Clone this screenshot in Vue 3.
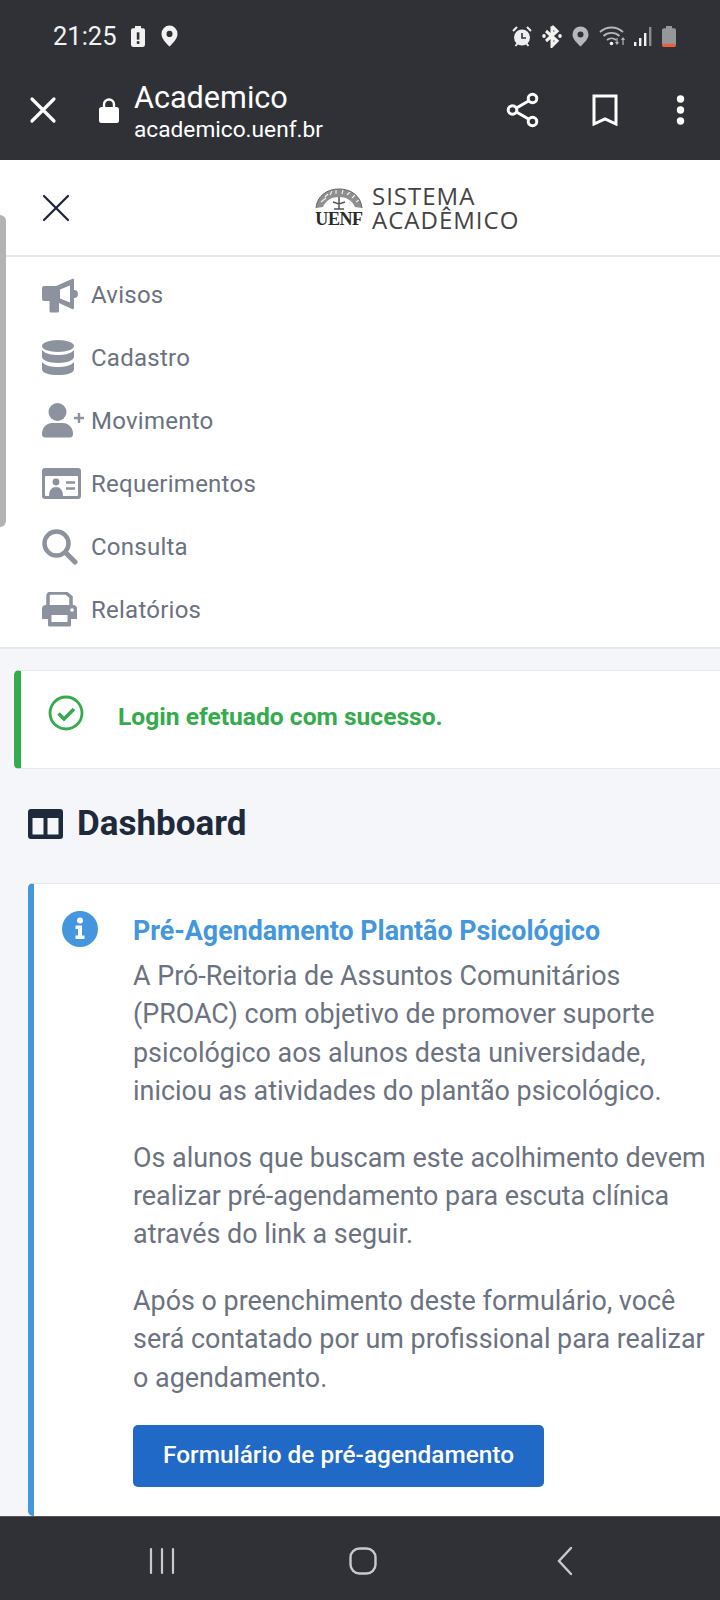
<script setup>
const menu = [
  { label: 'Avisos', icon: 'bullhorn' },
  { label: 'Cadastro', icon: 'database' },
  { label: 'Movimento', icon: 'user' },
  { label: 'Requerimentos', icon: 'card' },
  { label: 'Consulta', icon: 'search' },
  { label: 'Relatórios', icon: 'print' },
]

const paragraphs = [
  'A Pró-Reitoria de Assuntos Comunitários (PROAC) com objetivo de promover suporte psicológico aos alunos desta universidade, iniciou as atividades do plantão psicológico.',
  'Os alunos que buscam este acolhimento devem realizar pré-agendamento para escuta clínica através do link a seguir.',
  'Após o preenchimento deste formulário, você será contatado por um profissional para realizar o agendamento.',
]
</script>

<template>
  <div class="phone">
    <header class="chrome">
      <div class="status">
        <div class="status-left">
          <span class="clock">21:25</span>
          <svg class="batt-alert" width="16" height="23" viewBox="0 0 16 22" preserveAspectRatio="none"><path d="M5 1h6v2h2a2 2 0 0 1 2 2v14a2 2 0 0 1-2 2H3a2 2 0 0 1-2-2V5a2 2 0 0 1 2-2h2z" fill="#f2f2f2"/><rect x="6.800" y="7" width="2.600" height="7" fill="#303136"/><rect x="6.800" y="15.500" width="2.600" height="2.600" fill="#303136"/></svg>
          <svg class="pin" width="17" height="22" viewBox="0 0 17 21" preserveAspectRatio="none"><path d="M8.500 0.500a8 8 0 0 1 8 8c0 4.500-4.500 8.500-8 12-3.500-3.500-8-7.500-8-12a8 8 0 0 1 8-8z" fill="#f2f2f2"/><circle cx="8.500" cy="8.500" r="3" fill="#303136"/></svg>
        </div>
        <div class="status-right">
          <svg width="20" height="21" viewBox="0 0 20 21"><circle cx="10" cy="11.500" r="8" fill="#eceef2"/><path d="M10 7v5h4" stroke="#303136" stroke-width="1.600" fill="none"/><path d="M1 5l4-4M19 5l-4-4M3.500 20l2-2.500M16.500 20l-2-2.500" stroke="#eceef2" stroke-width="2"/></svg>
          <svg class="gap-10" width="20" height="24" viewBox="0 0 20 22" preserveAspectRatio="none"><path d="M10 2v18l5-4.500L4 6.500M10 2l5 4.500L4 15.500" stroke="#f2f2f2" stroke-width="3" fill="none"/><circle cx="2" cy="11" r="1.800" fill="#f2f2f2"/><circle cx="18" cy="11" r="1.800" fill="#f2f2f2"/></svg>
          <svg class="gap-10" width="17" height="21" viewBox="0 0 17 21"><path d="M8.500 0.500a8 8 0 0 1 8 8c0 4.500-4.500 8.500-8 12-3.500-3.500-8-7.500-8-12a8 8 0 0 1 8-8z" fill="#b6b7ba"/><circle cx="8.500" cy="8.500" r="3" fill="#303136"/></svg>
          <svg class="gap-10" width="28" height="22" viewBox="0 0 28 22"><path d="M1 7a17 17 0 0 1 23 0M4.500 11a12 12 0 0 1 16 0M8 15a7 7 0 0 1 9 0" stroke="#b6b7ba" stroke-width="1.800" fill="none"/><circle cx="12.500" cy="18.500" r="1.800" fill="#f2f2f2"/><path d="M18 13v6M16.500 17l1.500 2 1.500-2M24 20v-7M22.500 15l1.500-2 1.500 2" stroke="#b6b7ba" stroke-width="1.200" fill="none"/></svg>
          <svg class="gap-6" width="19" height="21" viewBox="0 0 19 21"><rect x="1" y="16" width="2.400" height="4" fill="#f2f2f2"/><rect x="6" y="12" width="2.400" height="8" fill="#f2f2f2"/><rect x="11" y="7" width="2.400" height="13" fill="#f2f2f2"/><rect x="16" y="1" width="2.400" height="19" fill="#8b8c8f"/></svg>
          <svg class="gap-9" width="16" height="23" viewBox="0 0 16 22" preserveAspectRatio="none"><path d="M5 1h6v2h2a2 2 0 0 1 2 2v14a2 2 0 0 1-2 2H3a2 2 0 0 1-2-2V5a2 2 0 0 1 2-2h2z" fill="#96979a"/><path d="M1 18h14v1a2 2 0 0 1-2 2H3a2 2 0 0 1-2-2z" fill="#e8603c"/></svg>
        </div>
      </div>
      <div class="toolbar">
        <svg class="close" width="28" height="28" viewBox="0 0 28 28"><path d="M3 3l22 22M25 3L3 25" stroke="#fff" stroke-width="3.200" stroke-linecap="round"/></svg>
        <svg class="lock" width="20" height="25" viewBox="0 0 20 25"><path d="M5 10V6.500a5 5 0 0 1 10 0V10" stroke="#fff" stroke-width="2.400" fill="none"/><rect y="9" width="20" height="16" rx="2.500" fill="#fff"/></svg>
        <div class="title">
          <div class="title-main">Academico</div>
          <div class="title-url">academico.uenf.br</div>
        </div>
        <svg class="share" width="34" height="36" viewBox="0 0 34 36"><path d="M26 7L7 18l19 11" stroke="#fff" stroke-width="3" fill="none"/><circle cx="26.500" cy="6.500" r="4.300" fill="#303136" stroke="#fff" stroke-width="3"/><circle cx="6.500" cy="18" r="4.300" fill="#303136" stroke="#fff" stroke-width="3"/><circle cx="26.500" cy="29.500" r="4.300" fill="#303136" stroke="#fff" stroke-width="3"/></svg>
        <svg class="bookmark" width="26" height="32" viewBox="0 0 26 32"><path d="M2 2h22v28l-11-5-11 5z" stroke="#fff" stroke-width="3" fill="none"/></svg>
        <svg class="dots" width="9" height="30" viewBox="0 0 9 30"><circle cx="4.500" cy="4" r="3.700" fill="#fff"/><circle cx="4.500" cy="15" r="3.700" fill="#fff"/><circle cx="4.500" cy="26" r="3.700" fill="#fff"/></svg>
      </div>
    </header>

    <main class="page">
      <div class="scroll-thumb"></div>

      <div class="topbar">
        <svg class="menu-close" width="28" height="28" viewBox="0 0 28 28"><path d="M2 2l24 24M26 2L2 26" stroke="#1a2238" stroke-width="2.200" stroke-linecap="round"/></svg>
        <div class="logo">
          <div class="seal">
            <svg width="48" height="22" viewBox="0 0 48 22"><path d="M1 20C2 8 12 1 24 1s22 7 23 19l-7-1C37 12 31 9 24 9S11 12 8 19z" fill="#8f8f8f"/><path d="M6 14l5-4M10 9l3-3M15 7l2-4M21 6V2M27 6l1-4M32 7l3-3M37 10l3-3M41 14l3-2" stroke="#f2f2f2" stroke-width="1.100"/><path d="M1 20C2 8 12 1 24 1s22 7 23 19" fill="none" stroke="#666" stroke-width="1"/><path d="M24 9v12M19 21h10M18 14l6 2 6-2" stroke="#555" stroke-width="1.500" fill="none"/></svg>
            <span class="seal-name">UENF</span>
          </div>
          <div class="logo-text">SISTEMA<br>ACADÊMICO</div>
        </div>
      </div>

      <nav class="menu">
        <a v-for="item in menu" :key="item.label" class="menu-item">
          <span class="menu-icon">
            <svg v-if="item.icon === 'bullhorn'" width="36" height="36" viewBox="0 0 36 36"><path d="M0 11a2 2 0 0 1 2-2h12l16-7c1-.500 2 0 2 1v10a4 4 0 0 1 0 8v10c0 1-1 1.500-2 1L17 26v8a1.500 1.500 0 0 1-1.500 1.500H9A1.500 1.500 0 0 1 7.500 34v-10H2a2 2 0 0 1-2-2z" fill="#8c929e"/><path d="M18 12.500l10-4v17l-10-4z" fill="#fff"/></svg>
            <svg v-else-if="item.icon === 'database'" width="32" height="36" viewBox="0 0 32 36"><ellipse cx="16" cy="6" rx="16" ry="6" fill="#8c929e"/><path d="M0 10c3 4 10 5 16 5s13-1 16-5v7c0 3-7 6-16 6S0 20 0 17z" fill="#8c929e"/><path d="M0 22c3 4 10 5 16 5s13-1 16-5v7c0 4-7 6-16 6S0 33 0 29z" fill="#8c929e"/></svg>
            <svg v-else-if="item.icon === 'user'" width="44" height="36" viewBox="0 0 44 36"><circle cx="15.500" cy="9" r="9" fill="#8c929e"/><path d="M0 31c0-7 5-11 10-11h11c5 0 10 4 10 11 0 2-1 3.500-3 3.500H3c-2 0-3-1.500-3-3.500z" fill="#8c929e"/><path d="M37 10v10M32 15h10" stroke="#8c929e" stroke-width="2.400"/></svg>
            <svg v-else-if="item.icon === 'card'" width="39" height="31" viewBox="0 0 39 31"><rect width="39" height="31" rx="3" fill="#8c929e"/><rect x="3" y="8" width="33" height="20" rx="1" fill="#fff"/><circle cx="14" cy="14" r="3.400" fill="#8c929e"/><path d="M7 28c0-6 3-9 7-9s7 3 7 9z" fill="#8c929e"/><path d="M24 14.500h9M24 20.500h9" stroke="#8c929e" stroke-width="2.600"/></svg>
            <svg v-else-if="item.icon === 'search'" width="36" height="36" viewBox="0 0 36 36"><circle cx="14.500" cy="14.500" r="12" fill="none" stroke="#8c929e" stroke-width="4.500"/><path d="M23.500 23.500L33 33" stroke="#8c929e" stroke-width="5" stroke-linecap="round"/></svg>
            <svg v-else width="35" height="35" viewBox="0 0 35 35"><path d="M6 13V4a3 3 0 0 1 3-3h15l5 4v8" fill="none" stroke="#8c929e" stroke-width="3.500"/><path d="M4 13h27a4 4 0 0 1 4 4v10H0V17a4 4 0 0 1 4-4z" fill="#8c929e"/><path d="M6 22h23v11a1.500 1.500 0 0 1-1.500 1.500h-20A1.500 1.500 0 0 1 6 33z" fill="#8c929e"/><rect x="9.500" y="23" width="16" height="7" fill="#fff"/><circle cx="30" cy="18" r="1.800" fill="#fff"/></svg>
          </span>
          <span class="menu-label">{{ item.label }}</span>
        </a>
      </nav>

      <section class="content">
        <div class="alert-success">
          <svg width="36" height="36" viewBox="0 0 36 36"><circle cx="18" cy="18" r="16" fill="none" stroke="#34ab4c" stroke-width="2.800"/><path d="M10.500 18.500l5.500 5.500 10-10" fill="none" stroke="#34ab4c" stroke-width="3.600"/></svg>
          <span class="alert-text">Login efetuado com sucesso.</span>
        </div>

        <h1 class="dash-title">
          <svg width="35" height="30" viewBox="0 0 35 30"><path fill-rule="evenodd" d="M3 0h29a3 3 0 0 1 3 3v24a3 3 0 0 1-3 3H3a3 3 0 0 1-3-3V3a3 3 0 0 1 3-3zM4.500 9v16.500h11V9zM19.500 9v16.500h11V9z" fill="#1e293b"/></svg>
          Dashboard
        </h1>

        <article class="notice">
          <svg class="info" width="36" height="36" viewBox="0 0 36 36"><circle cx="18" cy="18" r="18" fill="#4496dd"/><circle cx="18" cy="9.500" r="3" fill="#fff"/><path d="M13.500 14.500h6.500v10h2.500v3.500h-9v-3.500H16v-6.500h-2.500z" fill="#fff"/></svg>
          <div class="notice-body">
            <h2 class="notice-title">Pré-Agendamento Plantão Psicológico</h2>
            <p v-for="(text, i) in paragraphs" :key="i">{{ text }}</p>
            <a class="btn">Formulário de pré-agendamento</a>
          </div>
        </article>
      </section>
    </main>

    <footer class="navbar">
      <svg width="28" height="28" viewBox="0 0 28 28"><path d="M3 2v24M14 2v24M25 2v24" stroke="#c9c9cb" stroke-width="2.200" stroke-linecap="round"/></svg>
      <svg class="home" width="28" height="28" viewBox="0 0 28 28"><rect x="1.500" y="1.500" width="25" height="25" rx="9" fill="none" stroke="#c9c9cb" stroke-width="2.400"/></svg>
      <svg width="16" height="30" viewBox="0 0 16 30"><path d="M14 2L2 15l12 13" fill="none" stroke="#c9c9cb" stroke-width="2.400" stroke-linecap="round"/></svg>
    </footer>
  </div>
</template>

<style>
body {
  background: #f4f6fa;
}
</style>

<style scoped>
.phone {
  width: 720px;
  height: 1600px;
  display: flex;
  flex-direction: column;
  overflow: hidden;
  font-family: Roboto, "Liberation Sans", sans-serif;
}

.chrome {
  height: 160px;
  background: #303136;
  color: #fff;
  flex: none;
}

.status {
  height: 72px;
  display: flex;
  justify-content: space-between;
  align-items: center;
  padding: 0 43px 0 53px;
}

.status-left,
.status-right {
  display: flex;
  align-items: center;
}

.clock {
  font-size: 25.5px;
  color: #f2f2f2;
}

.batt-alert {
  margin-left: 13px;
}

.pin {
  margin-left: 15px;
}

.gap-10 {
  margin-left: 10px;
}

.gap-9 {
  margin-left: 9px;
}

.gap-6 {
  margin-left: 6px;
}

.toolbar {
  height: 72px;
  box-sizing: border-box;
  padding: 4px 0 0 29px;
  display: flex;
  align-items: center;
}

.lock {
  margin-left: 42px;
  flex: none;
}

.title {
  margin-left: 15px;
  flex: 1;
  margin-top: 6px;
}

.title-main {
  font-size: 30.6px;
  line-height: 34px;
}

.title-url {
  font-size: 22.7px;
  line-height: 30px;
}

.share {
  margin-right: 52px;
}

.bookmark {
  margin-right: 58px;
}

.dots {
  margin-right: 35px;
}

.page {
  position: relative;
  flex: 1;
  min-height: 0;
  overflow: hidden;
  background: #f4f6fa;
}

.scroll-thumb {
  position: absolute;
  left: 0;
  top: 55px;
  width: 6px;
  height: 312px;
  background: #b3b3b3;
  border-radius: 0 6px 6px 0;
  z-index: 2;
}

.topbar {
  height: 97px;
  box-sizing: border-box;
  background: #fff;
  border-bottom: 2px solid #e6e8ec;
  display: flex;
  align-items: center;
  padding-left: 42px;
}

.logo {
  margin-left: 245px;
  display: flex;
  align-items: center;
  gap: 9px;
}

.seal {
  width: 48px;
  display: flex;
  flex-direction: column;
  align-items: center;
}

.seal-name {
  font-family: "Liberation Serif", serif;
  font-weight: 700;
  font-size: 18px;
  line-height: 18px;
  letter-spacing: -0.4px;
  color: #2a2a2a;
  white-space: nowrap;
}

.logo-text {
  font-family: "Open Sans", sans-serif;
  font-size: 24px;
  line-height: 24px;
  letter-spacing: 1px;
  color: #444;
}

.menu {
  background: #fff;
  border-bottom: 2px solid #e6e8ec;
  padding: 6px 0 4px;
  height: 392px;
  box-sizing: border-box;
}

.menu-item {
  height: 63px;
  display: flex;
  align-items: center;
  padding-left: 42px;
}

.menu-icon {
  width: 49px;
  display: flex;
  align-items: center;
  flex: none;
}

.menu-label {
  font-size: 24px;
  color: #6b7280;
  letter-spacing: 0.25px;
}

.content {
  padding: 21px 0 0 14px;
}

.alert-success {
  height: 99px;
  box-sizing: border-box;
  background: #fff;
  border-left: 7px solid #34ab4c;
  border-top: 1px solid #e6e8ec;
  border-bottom: 1px solid #e6e8ec;
  border-radius: 5px 0 0 5px;
  display: flex;
  align-items: flex-start;
  padding: 24px 0 0 27px;
}

.alert-text {
  margin-left: 34px;
  margin-top: 7px;
  font-size: 24.6px;
  font-weight: 700;
  color: #34ab4c;
}

.dash-title {
  margin: 35px 0 39px 14px;
  display: flex;
  align-items: center;
  gap: 14px;
  font-size: 35px;
  line-height: 40px;
  font-weight: 700;
  color: #1e293b;
}

.notice {
  margin-left: 14px;
  height: 633px;
  box-sizing: border-box;
  background: #fff;
  border-left: 6px solid #4496dd;
  border-top: 1px solid #e6e8ec;
  border-radius: 5px 0 0 5px;
  display: flex;
  align-items: flex-start;
  padding: 27px 0 0 28px;
}

.info {
  flex: none;
}

.notice-body {
  margin-left: 35px;
  width: 585px;
  flex: none;
}

.notice-title {
  margin: 5px 0 11px;
  font-size: 26.8px;
  line-height: 30px;
  font-weight: 700;
  color: #4496dd;
}

.notice-body p {
  margin: 0 0 28px;
  font-size: 26.9px;
  line-height: 38.4px;
  color: #6b7280;
}

.btn {
  display: block;
  margin-top: 2px;
  width: 411px;
  height: 62px;
  line-height: 60px;
  text-align: center;
  background: #2069c6;
  border-radius: 5px;
  color: #fff;
  font-size: 24.4px;
  font-weight: 500;
}

.navbar {
  height: 84px;
  box-sizing: border-box;
  padding: 4px 147px 0 148px;
  flex: none;
  background: #303136;
  border-top: 1px solid #5a5654;
  display: flex;
  align-items: center;
  justify-content: space-between;
}

.home {
  margin-left: -8px;
}
</style>
